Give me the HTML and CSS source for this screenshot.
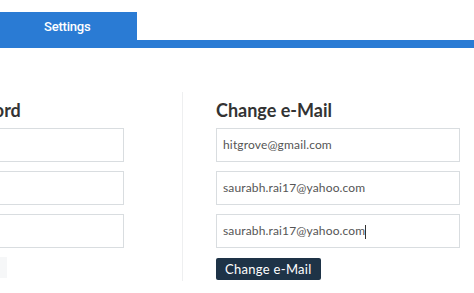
FILE: index.html
```html
<!DOCTYPE html>
<html lang="en">
<head>
<meta charset="utf-8">
<title>Settings</title>
<link rel="stylesheet" href="styles.css">
</head>
<body>
<div class="page">
  <div class="tabs">
    <div class="tab">Settings</div>
  </div>
  <div class="bar"></div>
  <div class="panels">
    <section class="panel panel-left">
      <h2 class="heading">Change Password</h2>
      <div class="field"></div>
      <div class="field"></div>
      <div class="field"></div>
      <div class="btn-ghost"></div>
    </section>
    <div class="divider"></div>
    <section class="panel panel-right">
      <h2 class="heading">Change e-Mail</h2>
      <div class="field">hitgrove@gmail.com</div>
      <div class="field">saurabh.rai17@yahoo.com</div>
      <div class="field">saurabh.rai17@yahoo.com<span class="caret"></span></div>
      <div class="btn">Change e-Mail</div>
    </section>
  </div>
</div>
</body>
</html>
```
FILE: styles.css
```css
html, body {
  margin: 0;
  padding: 0;
  background: #ffffff;
  overflow: hidden;
}
.page {
  width: 474px;
  height: 293px;
  overflow: hidden;
  font-family: "Lato", "Open Sans", sans-serif;
}
.tabs {
  display: flex;
  padding-top: 12px;
  height: 28px;
}
.tab {
  width: 137px;
  height: 28px;
  background: #2a7bd4;
  color: #ffffff;
  font-family: "Roboto", sans-serif;
  font-weight: 500;
  font-size: 13px;
  letter-spacing: -0.2px;
  line-height: 30px;
  box-sizing: border-box;
  padding-left: 44px;
}
.bar {
  height: 8px;
  background: #2a7bd4;
}
.panels {
  display: flex;
  padding-top: 44px;
}
.panel {
  width: 245px;
  flex: none;
}
.panel-left {
  margin-left: -121px;
}
.panel-left .heading {
  text-align: right;
  width: 140px;
}
.divider {
  width: 1px;
  height: 189px;
  background: #eeeff0;
  margin-left: 58px;
  margin-right: 33px;
}
.panel-right {
  width: 244px;
}
.heading {
  margin: 0 0 6px 0;
  padding-top: 6px;
  font-size: 18px;
  font-weight: 700;
  color: #333333;
  height: 24px;
  line-height: 24px;
  white-space: nowrap;
}
.field {
  height: 34px;
  box-sizing: border-box;
  border: 1px solid #d9dde0;
  margin-bottom: 9px;
  padding-left: 6px;
  font-size: 12px;
  letter-spacing: 0.15px;
  line-height: 32px;
  color: #555555;
  white-space: nowrap;
}
.caret {
  display: inline-block;
  width: 1px;
  height: 14px;
  background: #333;
  vertical-align: middle;
}
.btn {
  display: inline-block;
  height: 22px;
  box-sizing: border-box;
  padding: 0 9px;
  background: #1e3347;
  border-radius: 2px;
  color: #ffffff;
  font-size: 13px;
  letter-spacing: 0.3px;
  line-height: 22px;
  margin-top: 1px;
}
.btn-ghost {
  margin-left: 121px;
  width: 7px;
  height: 21px;
  margin-top: 1px;
  background: #f6f7f8;
}
```
